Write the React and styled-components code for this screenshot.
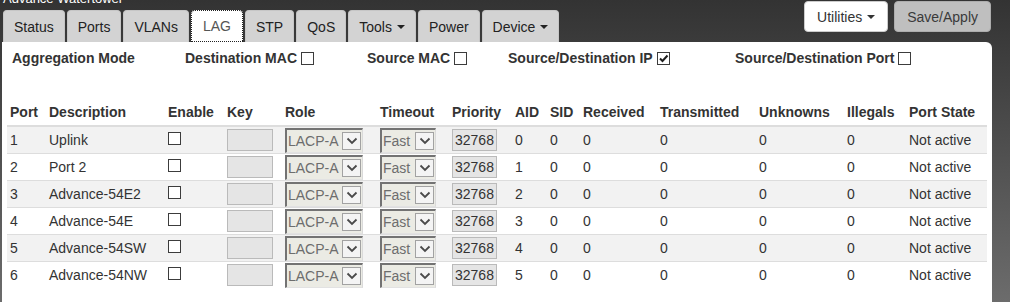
import React from 'react';
import styled, { createGlobalStyle, css } from 'styled-components';

const GlobalStyle = createGlobalStyle`
  html {
    background: linear-gradient(to bottom, #333333 0%, #6c6c6c 100%) fixed;
    min-height: 100%;
  }
  body {
    margin: 0;
    font-family: "Liberation Sans", Arial, sans-serif;
    font-size: 14px;
    color: #333;
  }
`;

const Page = styled.div`
  width: 990px;
  margin-left: 2px;
`;

const TopBar = styled.div`
  display: flex;
  justify-content: space-between;
  align-items: flex-start;
`;

const LeftCol = styled.div`
  display: flex;
  flex-direction: column;
`;

const Title = styled.div`
  margin-top: -9px;
  font-size: 13px;
  line-height: 15px;
  color: #fff;
  padding-left: 1px;
`;

const Tabs = styled.div`
  display: flex;
  gap: 2px;
  margin-top: 4px;
  margin-left: 1px;
`;

const Tab = styled.div`
  height: 32px;
  box-sizing: border-box;
  display: flex;
  align-items: center;
  padding: 0 10px;
  background: #d3d3d3;
  border: 1px solid #c6c6c6;
  border-bottom: none;
  border-radius: 4px 4px 0 0;
  color: #222;
  font-size: 14px;

  ${(p) =>
    p.$active &&
    css`
      background: #fff;
      color: #555;
      border: 1px dotted #222;
      padding: 0 11px;
    `}
`;

const Caret = styled.span`
  display: inline-block;
  width: 0;
  height: 0;
  margin-left: 5px;
  border-top: 4px solid currentColor;
  border-left: 4px solid transparent;
  border-right: 4px solid transparent;
`;

const Actions = styled.div`
  display: flex;
  gap: 6px;
  margin-top: 1px;
  margin-right: 1px;
`;

const Button = styled.div`
  height: 31px;
  box-sizing: border-box;
  display: flex;
  align-items: center;
  padding: 0 12px;
  border-radius: 4px;
  font-size: 14px;
  border: 1px solid ${(p) => (p.$muted ? '#adadad' : '#ccc')};
  background: ${(p) => (p.$muted ? '#bfbfbf' : '#fff')};
  color: ${(p) => (p.$muted ? '#3a3a3a' : '#333')};
`;

const Panel = styled.div`
  background: #fff;
  border-radius: 0 6px 0 0;
  padding: 0 5px 24px;
`;

const AggRow = styled.div`
  display: flex;
  align-items: center;
  padding: 6px 0 0 5px;
  height: 20px;
  font-weight: bold;
  color: #333;
`;

const AggCell = styled.div`
  display: flex;
  align-items: center;
  gap: 4px;
  width: ${(p) => (p.$w ? `${p.$w}px` : 'auto')};
  flex: ${(p) => (p.$w ? 'none' : '1')};
`;

const Box = styled.span`
  display: inline-flex;
  align-items: center;
  justify-content: center;
  width: 13px;
  height: 13px;
  box-sizing: border-box;
  border: 1px solid #3c3c3c;
  background: #fff;
`;

const Table = styled.table`
  width: 980px;
  margin-top: 31px;
  table-layout: fixed;
  border-collapse: separate;
  border-spacing: 0;
  font-size: 14px;
  color: #333;

  th {
    height: 26px;
    padding: 0 3px;
    text-align: left;
    font-weight: bold;
    vertical-align: middle;
    white-space: nowrap;
    border-bottom: 2px solid #ddd;
  }

  td {
    height: 26px;
    padding: 0 3px;
    vertical-align: middle;
    white-space: nowrap;
    border-top: 1px solid #ddd;
  }

  tbody tr:first-child td {
    border-top: none;
  }

  tbody tr:nth-child(odd) td {
    background: #f2f2f2;
  }
`;

const Field = styled.div`
  width: ${(p) => p.$w}px;
  height: 22px;
  box-sizing: border-box;
  border: 1px solid #bababa;
  background: #e5e5e5;
  color: #333;
  padding-left: 2px;
  line-height: 20px;
`;

const Select = styled.div`
  width: ${(p) => p.$w}px;
  height: 25px;
  box-sizing: border-box;
  display: flex;
  align-items: center;
  justify-content: space-between;
  border-style: solid;
  border-width: 2px 1px 1px 2px;
  border-color: #737373 #dadada #e2e2e2 #737373;
  background: #ebebe4;
  color: #6d6d6d;
  padding-left: 1px;
`;

const Arrow = styled.span`
  display: flex;
  align-items: center;
  justify-content: center;
  width: 19px;
  height: 18px;
  box-sizing: border-box;
  border: 1px solid #a2a2a2;
  background: #f4f4f4;
  margin-right: 1px;
`;

const Checkbox = ({ checked }) => (
  <Box>
    {checked && (
      <svg width="11" height="11" viewBox="0 0 11 11">
        <path d="M2 5.5 L4.5 8 L9.5 2.5" fill="none" stroke="#1e1e1e" strokeWidth="2" />
      </svg>
    )}
  </Box>
);

const Dropdown = ({ value, width }) => (
  <Select $w={width}>
    <span>{value}</span>
    <Arrow>
      <svg width="12" height="8" viewBox="0 0 12 8">
        <path d="M1.5 1.5 L6 6 L10.5 1.5" fill="none" stroke="#4a4a4a" strokeWidth="1.8" />
      </svg>
    </Arrow>
  </Select>
);

const tabs = [
  { label: 'Status' },
  { label: 'Ports' },
  { label: 'VLANs' },
  { label: 'LAG', active: true },
  { label: 'STP' },
  { label: 'QoS' },
  { label: 'Tools', caret: true },
  { label: 'Power' },
  { label: 'Device', caret: true },
];

const modes = [
  { label: 'Destination MAC', w: 182 },
  { label: 'Source MAC', w: 141 },
  { label: 'Source/Destination IP', w: 227, checked: true },
  { label: 'Source/Destination Port' },
];

const columns = [
  ['Port', 39],
  ['Description', 119],
  ['Enable', 59],
  ['Key', 58],
  ['Role', 95],
  ['Timeout', 72],
  ['Priority', 63],
  ['AID', 35],
  ['SID', 33],
  ['Received', 77],
  ['Transmitted', 99],
  ['Unknowns', 88],
  ['Illegals', 62],
  ['Port State', 81],
];

const ports = ['Uplink', 'Port 2', 'Advance-54E2', 'Advance-54E', 'Advance-54SW', 'Advance-54NW'];

export default function App() {
  return (
    <Page>
      <GlobalStyle />
      <TopBar>
        <LeftCol>
          <Title>Advance Watertower</Title>
          <Tabs>
            {tabs.map((t) => (
              <Tab key={t.label} $active={t.active}>
                {t.label}
                {t.caret && <Caret />}
              </Tab>
            ))}
          </Tabs>
        </LeftCol>
        <Actions>
          <Button>
            Utilities
            <Caret />
          </Button>
          <Button $muted>Save/Apply</Button>
        </Actions>
      </TopBar>

      <Panel>
        <AggRow>
          <AggCell $w={173}>Aggregation Mode</AggCell>
          {modes.map((m) => (
            <AggCell key={m.label} $w={m.w}>
              {m.label}
              <Checkbox checked={m.checked} />
            </AggCell>
          ))}
        </AggRow>

        <Table>
          <colgroup>
            {columns.map(([name, w]) => (
              <col key={name} style={{ width: w }} />
            ))}
          </colgroup>
          <thead>
            <tr>
              {columns.map(([name]) => (
                <th key={name}>{name}</th>
              ))}
            </tr>
          </thead>
          <tbody>
            {ports.map((desc, i) => (
              <tr key={desc}>
                <td>{i + 1}</td>
                <td>{desc}</td>
                <td>
                  <Checkbox />
                </td>
                <td>
                  <Field $w={46} />
                </td>
                <td>
                  <Dropdown value="LACP-A" width={78} />
                </td>
                <td>
                  <Dropdown value="Fast" width={56} />
                </td>
                <td>
                  <Field $w={45}>32768</Field>
                </td>
                <td>{i}</td>
                <td>0</td>
                <td>0</td>
                <td>0</td>
                <td>0</td>
                <td>0</td>
                <td>Not active</td>
              </tr>
            ))}
          </tbody>
        </Table>
      </Panel>
    </Page>
  );
}
